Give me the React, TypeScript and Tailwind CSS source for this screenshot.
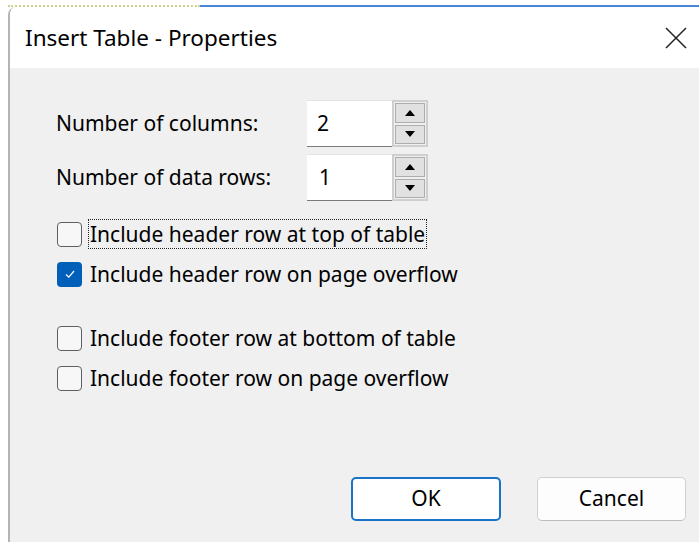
import React from 'react';

const font = "font-['Noto_Sans','Open_Sans',Arial,sans-serif]";

const SpinBox: React.FC<{ value: string; indent?: string }> = ({ value, indent = 'pl-[10px]' }) => {
  return (
    <div className="flex h-[47px]">
      <div className={`w-[85px] bg-white border-t border-[#e3e3e3] border-b border-b-[#7a7a7a] flex items-center ${indent} text-[21px] text-black`}>
        {value}
      </div>
      <div className="w-[36px] border-2 border-[#cfcfcf] bg-[#f0f0f0] flex flex-col gap-[2px] p-[1px]">
        <button className="flex-1 border border-[#adadad] bg-[#e1e1e1] flex items-center justify-center">
          <svg width="10" height="6" viewBox="0 0 10 6">
            <path d="M0 6 L5 0 L10 6 Z" fill="#000" />
          </svg>
        </button>
        <button className="flex-1 border border-[#adadad] bg-[#e1e1e1] flex items-center justify-center">
          <svg width="10" height="6" viewBox="0 0 10 6">
            <path d="M0 0 L10 0 L5 6 Z" fill="#000" />
          </svg>
        </button>
      </div>
    </div>
  );
};

const CheckRow: React.FC<{ label: string; checked?: boolean; focused?: boolean }> = ({ label, checked, focused }) => {
  return (
    <div className="h-[40px] flex items-center">
      {checked ? (
        <span className="w-[25px] h-[25px] rounded-[4px] bg-[#005fb8] flex items-center justify-center shrink-0">
          <svg width="14" height="14" viewBox="0 0 14 14">
            <path d="M3 7.5 L5.8 10.2 L11 4" fill="none" stroke="#fff" strokeWidth="1.2" />
          </svg>
        </span>
      ) : (
        <span className="w-[25px] h-[25px] rounded-[4px] border-[1.5px] border-[#5f5f5f] bg-[#f7f7f7] shrink-0" />
      )}
      <span
        className={`ml-[6px] text-[21px] leading-[28px] text-black px-[1px] ${
          focused ? 'border border-dotted border-[#222]' : 'border border-transparent'
        }`}
      >
        {label}
      </span>
    </div>
  );
};

const App: React.FC = () => {
  return (
    <div className={`w-[699px] h-[542px] bg-white overflow-hidden ${font}`}>
      {/* strip of the document behind the dialog */}
      <div className="h-[7px] flex items-end pl-[8px]">
        <div className="w-[192px] h-[2px] border-t-2 border-dotted border-[#cfd28a]" />
        <div className="flex-1 h-[2px] bg-[#4a86d8]" />
      </div>

      <div className="ml-[8px] h-[535px] flex flex-col border-l-2 border-[#b4b4b4] rounded-tl-[8px] overflow-hidden">
        {/* title bar */}
        <div className="h-[61px] bg-white flex items-center justify-between pl-[15px] pr-[12px] shrink-0">
          <span className="text-[22.5px] text-black">Insert Table - Properties</span>
          <svg width="22" height="22" viewBox="0 0 22 22">
            <path d="M1 1 L21 21 M21 1 L1 21" stroke="#222" strokeWidth="1.5" />
          </svg>
        </div>

        {/* body */}
        <div className="flex-1 bg-[#f0f0f0] flex flex-col pl-[46px] pt-[32px] pb-[21px]">
          <div className="flex flex-col gap-[7px]">
            <div className="flex items-center">
              <span className="w-[251px] text-[21px] text-black">Number of columns:</span>
              <SpinBox value="2" />
            </div>
            <div className="flex items-center">
              <span className="w-[251px] text-[21px] text-black">Number of data rows:</span>
              <SpinBox value="1" indent="pl-[12px]" />
            </div>
          </div>

          <div className="mt-[13px] pl-[1px]">
            <CheckRow label="Include header row at top of table" focused />
            <CheckRow label="Include header row on page overflow" checked />
            <div className="h-[24px]" />
            <CheckRow label="Include footer row at bottom of table" />
            <CheckRow label="Include footer row on page overflow" />
          </div>

          <div className="mt-auto flex justify-end gap-[36px] pr-[13px]">
            <button className="w-[150px] h-[44px] rounded-[5px] border-2 border-[#1a73c8] bg-white text-[21px] text-black">
              OK
            </button>
            <button className="w-[149px] h-[44px] rounded-[5px] border border-[#d0d0d0] border-b-[#bdbdbd] bg-[#fdfdfd] text-[21px] text-black">
              Cancel
            </button>
          </div>
        </div>
      </div>
    </div>
  );
};

export default App;
